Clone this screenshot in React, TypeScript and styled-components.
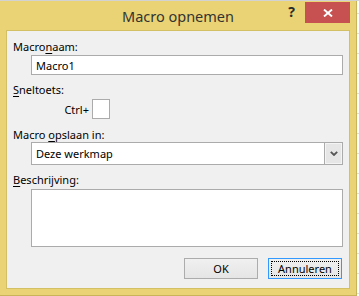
import React from 'react';
import styled, { createGlobalStyle } from 'styled-components';

const Global = createGlobalStyle`
  html, body { margin: 0; padding: 0; }
  body {
    width: 359px;
    height: 296px;
    overflow: hidden;
    background: #fff;
    font-family: "Noto Sans", "Open Sans", sans-serif;
  }
`;

const Desk = styled.div`
  width: 359px;
  height: 296px;
  overflow: hidden;
  background:
    linear-gradient(#d2d2d2, #d2d2d2) top left / 100% 1px no-repeat,
    repeating-linear-gradient(to bottom, transparent 0 13px, #dcdcdc 13px 14px, transparent 14px 20px),
    #fff;
`;

const Window = styled.div`
  margin-top: 1px;
  width: 357px;
  height: 295px;
  box-sizing: border-box;
  background: #e9d374;
  border-right: 1px solid #c9b45a;
  border-bottom: 1px solid #c9b45a;
  display: flex;
  flex-direction: column;
`;

const TitleBar = styled.div`
  height: 30px;
  display: grid;
  grid-template-columns: 1fr auto 1fr;
  align-items: start;
`;

const Title = styled.div`
  grid-column: 2;
  padding-top: 5px;
  font-size: 14.5px;
  line-height: 20px;
  color: #333;
  white-space: nowrap;
`;

const Controls = styled.div`
  grid-column: 3;
  justify-self: end;
  display: flex;
  padding-top: 1px;
  padding-right: 6px;
`;

const HelpButton = styled.div`
  width: 27px;
  height: 21px;
  display: flex;
  align-items: center;
  justify-content: center;
  font-size: 14px;
  font-weight: 700;
  color: #2b2b2b;
  padding-bottom: 2px;
  box-sizing: border-box;
`;

const CloseButton = styled.div`
  width: 45px;
  height: 21px;
  background: #c75050;
  display: flex;
  align-items: center;
  justify-content: center;
`;

const Client = styled.div`
  margin: 0 7px;
  height: 257px;
  background: #f0f0f0;
  box-shadow: 0 0 0 1px #d4c064;
  box-sizing: border-box;
  padding: 8px 0 0 6px;
  display: flex;
  flex-direction: column;
  font-size: 11px;
  line-height: 15px;
  color: #000;
`;

const Label = styled.div<{ $top: number }>`
  margin-top: ${p => p.$top}px;
  height: 15px;
  white-space: nowrap;
  u { text-decoration: underline; text-underline-offset: 2px; }
`;

const FieldBase = `
  margin-left: 18px;
  width: 312px;
  box-sizing: border-box;
  border: 1px solid #ababab;
  background: #fff;
  font-family: "Noto Sans", "Open Sans", sans-serif;
  font-size: 11px;
  color: #000;
  outline: none;
`;

const TextField = styled.input`
  ${FieldBase}
  margin-top: 1px;
  height: 20px;
  padding: 0 4px;
`;

const CtrlRow = styled.div`
  margin-top: 2px;
  padding-left: 50px;
  display: flex;
  align-items: center;
  height: 20px;
`;

const CtrlLabel = styled.span`
  width: 29px;
  padding-right: 3px;
  box-sizing: border-box;
  text-align: right;
`;

const KeyBox = styled.input`
  width: 18px;
  height: 20px;
  box-sizing: border-box;
  border: 1px solid #ababab;
  background: #fff;
  padding: 0;
  outline: none;
`;

const Combo = styled.div`
  ${FieldBase}
  height: 23px;
  display: flex;
  align-items: stretch;
`;

const ComboValue = styled.div`
  flex: 1;
  padding-left: 4px;
  display: flex;
  align-items: center;
`;

const ComboButton = styled.div`
  width: 17px;
  border-left: 1px solid #ababab;
  background: #e6e6e6;
  box-shadow: inset 0 0 0 1px #f4f4f4;
  display: flex;
  align-items: center;
  justify-content: center;
`;

const TextArea = styled.textarea`
  ${FieldBase}
  margin-top: 2px;
  height: 58px;
  resize: none;
  padding: 2px 4px;
  display: block;
`;

const ButtonRow = styled.div`
  margin-top: 11px;
  padding-right: 7px;
  display: flex;
  justify-content: flex-end;
  gap: 10px;
`;

const Button = styled.div<{ $focused?: boolean }>`
  position: relative;
  width: 74px;
  height: 21px;
  box-sizing: border-box;
  border: 1px solid ${p => (p.$focused ? '#3399ff' : '#acacac')};
  background: linear-gradient(#f0f0f0, #e5e5e5);
  display: flex;
  align-items: center;
  justify-content: center;
  font-size: 11px;
  color: #000;
  ${p =>
    p.$focused &&
    `&::after {
      content: '';
      position: absolute;
      inset: 2px;
      border: 1px dotted #000;
    }`}
`;

export default function App() {
  return (
    <>
      <Global />
      <Desk>
        <Window>
          <TitleBar>
            <Title>Macro opnemen</Title>
            <Controls>
              <HelpButton>?</HelpButton>
              <CloseButton>
                <svg width="10" height="8" viewBox="0 0 10 8">
                  <path d="M1 0.5 L9 7.5 M9 0.5 L1 7.5" stroke="#fff" strokeWidth="1.9" />
                </svg>
              </CloseButton>
            </Controls>
          </TitleBar>
          <Client>
            <Label $top={0}>
              Macro<u>n</u>aam:
            </Label>
            <TextField defaultValue="Macro1" />
            <Label $top={7}>
              <u>S</u>neltoets:
            </Label>
            <CtrlRow>
              <CtrlLabel>Ctrl+</CtrlLabel>
              <KeyBox />
            </CtrlRow>
            <Label $top={8}>
              Macro <u>o</u>pslaan in:
            </Label>
            <Combo>
              <ComboValue>Deze werkmap</ComboValue>
              <ComboButton>
                <svg width="8" height="5" viewBox="0 0 8 5">
                  <path d="M0.8 0.8 L4 4 L7.2 0.8" stroke="#555" strokeWidth="1.8" fill="none" />
                </svg>
              </ComboButton>
            </Combo>
            <Label $top={7}>
              <u>B</u>eschrijving:
            </Label>
            <TextArea />
            <ButtonRow>
              <Button>OK</Button>
              <Button $focused>Annuleren</Button>
            </ButtonRow>
          </Client>
        </Window>
      </Desk>
    </>
  );
}
